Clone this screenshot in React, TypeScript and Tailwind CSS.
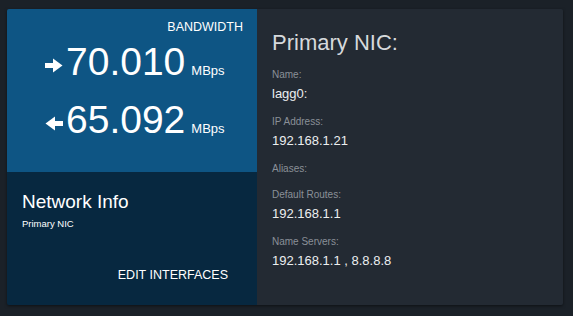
const font = { fontFamily: '"Liberation Sans", Arial, sans-serif' };

function ArrowIcon({ dir }: { dir: 'in' | 'out' }) {
  return (
    <svg
      width="18"
      height="15"
      viewBox="0 0 18 15"
      className={dir === 'in' ? 'shrink-0 -scale-x-100' : 'shrink-0'}
      fill="#ffffff"
    >
      <rect x="0" y="5" width="10" height="5" />
      <polygon points="8,0.5 17.5,7.5 8,14.5" />
    </svg>
  );
}

function Rate({ dir, value }: { dir: 'in' | 'out'; value: string }) {
  return (
    <div className="flex items-center pl-[38px] h-[38px]">
      <div className="mt-[6px]">
        <ArrowIcon dir={dir} />
      </div>
      <div className="flex items-baseline ml-[3px]">
        <span className="text-[39px] leading-[38px] text-white">{value}</span>
        <span className="text-[13px] text-white ml-[6px]">MBps</span>
      </div>
    </div>
  );
}

const details = [
  { label: 'Name:', value: 'lagg0:' },
  { label: 'IP Address:', value: '192.168.1.21' },
  { label: 'Aliases:', value: '' },
  { label: 'Default Routes:', value: '192.168.1.1' },
  { label: 'Name Servers:', value: '192.168.1.1 , 8.8.8.8' },
];

export default function App() {
  return (
    <div
      className="w-[573px] h-[316px] bg-[#1b2128] pt-[9px] pl-[7px]"
      style={font}
    >
      <div className="flex w-[556px] h-[296px] rounded-[2px] overflow-hidden shadow-[0_1px_3px_rgba(0,0,0,0.5)]">
        <div className="w-[250px] flex flex-col">
          <div className="h-[163px] bg-[#0e5584] pt-[11px]">
            <div className="text-right pr-[14px] text-[12.5px] leading-[14px] text-white">
              BANDWIDTH
            </div>
            <div className="mt-[9px] flex flex-col gap-[20px]">
              <Rate dir="out" value="70.010" />
              <Rate dir="in" value="65.092" />
            </div>
          </div>
          <div className="flex-1 bg-[#072840] pt-[19px] pl-[15px] flex flex-col">
            <div className="text-[19px] leading-[22px] text-white">Network Info</div>
            <div className="mt-[4px] text-[9.5px] leading-[14px] text-white">
              Primary NIC
            </div>
            <div className="mt-auto mb-[22px] flex justify-end pr-[29px]">
              <button className="text-[12.5px] leading-[16px] text-white uppercase">
                Edit Interfaces
              </button>
            </div>
          </div>
        </div>
        <div className="flex-1 bg-[#232a33] pt-[21px] pl-[15px]">
          <h2 className="text-[22px] leading-[26px] text-[#d6d9dc]">Primary NIC:</h2>
          <div className="mt-[12px]">
            {details.map((d) => (
              <div key={d.label} className="mb-[12px]">
                <div className="text-[10px] leading-[14px] text-[#8a9098]">{d.label}</div>
                {d.value && (
                  <div className="mt-[3px] text-[13px] leading-[18px] text-[#eceef0]">
                    {d.value}
                  </div>
                )}
              </div>
            ))}
          </div>
        </div>
      </div>
    </div>
  );
}
